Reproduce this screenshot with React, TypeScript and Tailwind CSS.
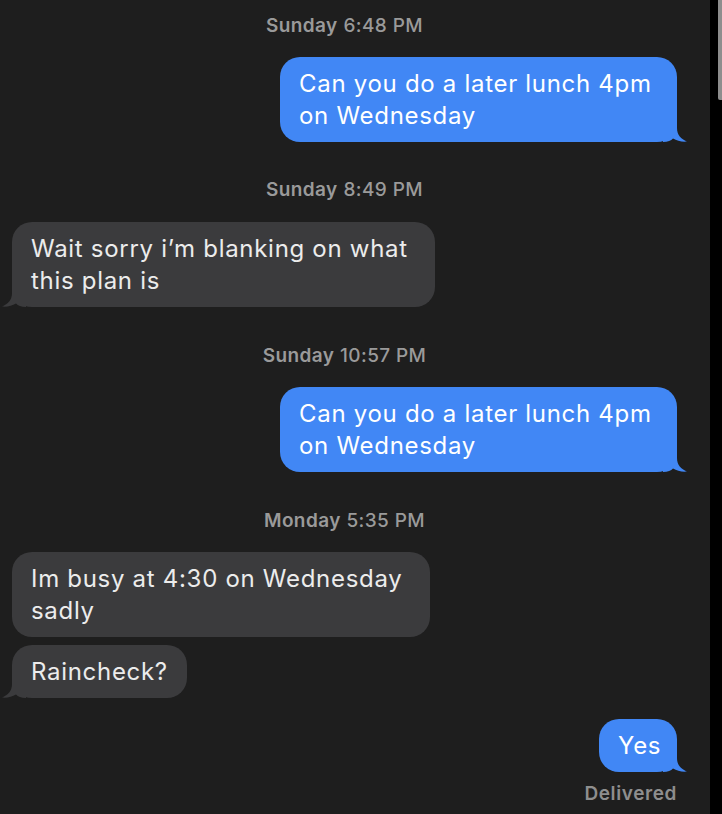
import type {JSX, ReactNode} from 'react';

type Side = "me" | "them";

const FONT = {fontFamily: 'Inter, "Noto Sans", "Liberation Sans", sans-serif'};

function Tail({side}: { side: Side }): JSX.Element {
    const fill = side === "me" ? "#4187f5" : "#3b3b3d";
    return (
        <svg width="24" height="24" viewBox="0 0 24 24"
             className={side === "me" ? "absolute bottom-0 right-[-10px]" : "absolute bottom-0 left-[-10px] -scale-x-100"}>
            <path d="M0 0 L14 0 L14 10 C14 17 18 21 24 23.5 C19 24 14 23 10 20.5 C8 22.5 5 24 0 24 Z" fill={fill}/>
        </svg>
    );
}

function Bubble({side, width, tail = true, children}: {
    side: Side;
    width: string;
    tail?: boolean;
    children: ReactNode
}): JSX.Element {
    const base = "relative rounded-[20px] py-[10.5px] pl-[19px] text-[24px] leading-[32px] tracking-[0.7px] whitespace-nowrap";
    const colors = side === "me" ? "bg-[#4187f5] text-white self-end" : "bg-[#3b3b3d] text-[#ececec] self-start";
    return (
        <div className={`${base} ${colors} ${width}`}>
            {children}
            {tail && <Tail side={side}/>}
        </div>
    );
}

function Stamp({day, time}: { day: string; time: string }): JSX.Element {
    return (
        <div className="self-center text-[19px] leading-[22px] tracking-[0.4px] text-[#9a9a9a]">
            <span className="font-semibold">{day}</span> <span className="font-medium">{time}</span>
        </div>
    );
}

export default function App(): JSX.Element {
    return (
        <div className="w-[722px] h-[814px] bg-[#1e1e1e] flex overflow-hidden" style={FONT}>
            <div className="w-[710px] flex flex-col pl-[12px] pr-[33px] pt-[15px]">
                <Stamp day="Sunday" time="6:48 PM"/>
                <div className="mt-[20px] flex flex-col">
                    <Bubble side="me" width="w-[397px]">Can you do a later lunch 4pm<br/>on Wednesday</Bubble>
                </div>
                <div className="mt-[37px] flex flex-col">
                    <Stamp day="Sunday" time="8:49 PM"/>
                </div>
                <div className="mt-[21px] flex flex-col">
                    <Bubble side="them" width="w-[423px]">Wait sorry i’m blanking on what<br/>this plan is</Bubble>
                </div>
                <div className="mt-[38px] flex flex-col">
                    <Stamp day="Sunday" time="10:57 PM"/>
                </div>
                <div className="mt-[20px] flex flex-col">
                    <Bubble side="me" width="w-[397px]">Can you do a later lunch 4pm<br/>on Wednesday</Bubble>
                </div>
                <div className="mt-[38px] flex flex-col">
                    <Stamp day="Monday" time="5:35 PM"/>
                </div>
                <div className="mt-[20px] flex flex-col gap-[8px]">
                    <Bubble side="them" width="w-[418px]" tail={false}>Im busy at 4:30 on Wednesday<br/>sadly</Bubble>
                    <Bubble side="them" width="w-[175px]">Raincheck?</Bubble>
                </div>
                <div className="mt-[21px] flex flex-col">
                    <Bubble side="me" width="w-[78px]">Yes</Bubble>
                </div>
                <div className="mt-[12px] self-end text-[19px] leading-[20px] tracking-[0.6px] font-semibold text-[#8e8e8e]">
                    Delivered
                </div>
            </div>
            <div className="w-[12px] h-full bg-black flex justify-end">
                <div className="w-[4px] h-[100px] bg-[#8d8d8d] rounded-bl-[2px]"/>
            </div>
        </div>
    );
}
